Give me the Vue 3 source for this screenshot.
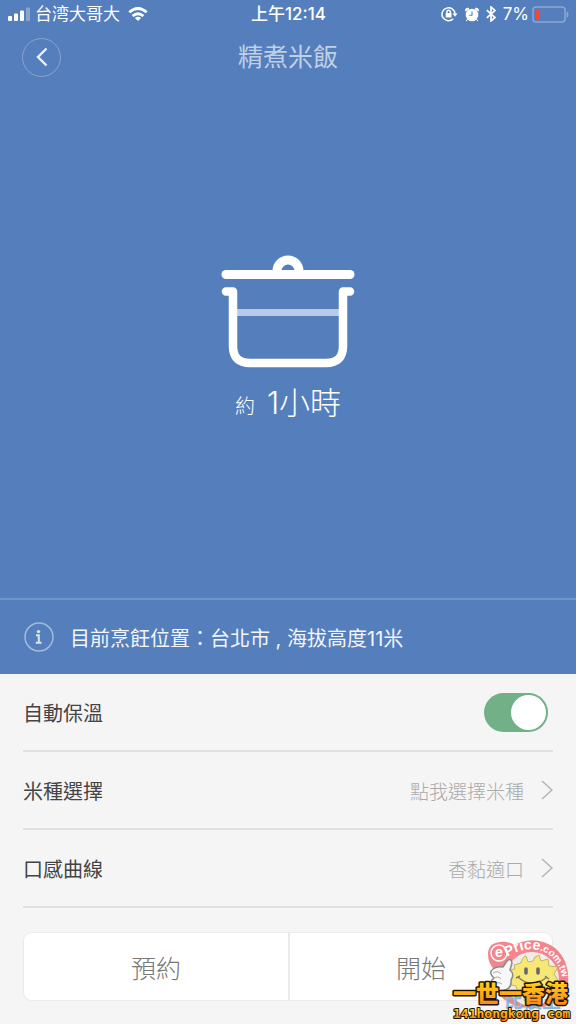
<script setup>
import { ref } from 'vue'

const keepWarm = ref(true)
const options = [
  { label: '米種選擇', value: '點我選擇米種' },
  { label: '口感曲線', value: '香黏適口' },
]
</script>

<template>
  <div class="screen">
    <section class="hero">
      <div class="status">
        <div class="status-left">
          <svg width="22" height="14" viewBox="0 0 22 14" fill="#fff" aria-hidden="true">
            <rect x="0" y="9" width="4" height="5" rx="1" />
            <rect x="6" y="6.500" width="4" height="7.500" rx="1" />
            <rect x="12" y="3.500" width="4" height="10.500" rx="1" />
            <rect x="18" y="0.500" width="4" height="13.500" rx="1" opacity=".3" />
          </svg>
          <span class="carrier">台湾大哥大</span>
          <svg width="20" height="14" viewBox="0 0 20 14" fill="none" stroke="#fff" stroke-width="2.800" aria-hidden="true">
            <path d="M1.300 5.300Q10-2.400 18.700 5.300M4.600 9Q10 4.500 15.400 9" />
            <path d="M10 14L6.900 11Q10 8.700 13.100 11Z" fill="#fff" stroke="none" />
          </svg>
        </div>
        <time class="clock">上午12:14</time>
        <div class="status-right">
          <svg width="17" height="16" viewBox="0 0 17 16" fill="none" stroke="#fff" stroke-width="1.500" aria-hidden="true">
            <path d="M12.200 12.800A6.500 6.500 0 1 1 14 8" />
            <path d="M11.400 7.600H16.600L14 10.800Z" fill="#fff" stroke="none" />
            <rect x="4.700" y="7" width="5.800" height="4.500" fill="#fff" stroke="none" />
            <path d="M5.900 7V5.800Q6 4.300 7.600 4.300T9.400 5.800V7" />
          </svg>
          <svg width="14" height="15" viewBox="0 0 14 15" aria-hidden="true">
            <circle cx="7" cy="8" r="6.300" fill="#fff" />
            <path d="M.8 4.200Q-.2 1.600 2 1.200Q3.200.9 4 1.800ZM13.200 4.200Q14.200 1.600 12 1.200Q10.800.9 10 1.800ZM2.500 12L1.200 14.200M11.500 12L12.800 14.200" fill="#fff" stroke="#fff" />
            <path d="M7 4.500V8.300H4.200" fill="none" stroke="#557fbc" stroke-width="1.100" />
          </svg>
          <svg width="10" height="16" viewBox="0 0 10 16" fill="none" stroke="#fff" stroke-width="1.700" aria-hidden="true">
            <path d="M.8 4.200L9 11.500L5 15V1L9 4.500L.8 11.800" />
          </svg>
          <span class="percent">7%</span>
          <svg class="battery" width="37" height="17" viewBox="0 0 37 17" aria-hidden="true">
            <rect x="1" y="1" width="32" height="15" rx="3" fill="none" stroke="#8ba8d2" stroke-width="1.500" />
            <path d="M34.500 5.500Q36.500 6 36.500 8.500T34.500 11.500Z" fill="#8ba8d2" />
            <rect x="3" y="3" width="4" height="11" rx="1" fill="#f4453d" />
          </svg>
        </div>
      </div>

      <header class="header">
        <button class="back" type="button" aria-label="返回">
          <svg width="12" height="20" viewBox="0 0 12 20" fill="none" stroke="#edf2f8" stroke-width="2.400" aria-hidden="true">
            <path d="M10.500 1.500L2 10L10.500 18.500" />
          </svg>
        </button>
        <h1>精煮米飯</h1>
      </header>

      <div class="cooker">
        <svg width="134" height="114" viewBox="0 0 134 114" fill="none" stroke="#fff" aria-hidden="true">
          <path d="M16 57.500H118" stroke="#b9cbe4" stroke-width="7" />
          <path d="M5 19.500H129" stroke-width="9" stroke-linecap="round" />
          <path d="M56 19V16A11 11 0 0 1 78 16V19" stroke-width="9" />
          <path d="M5 36.500H12V91Q12 108 29 108H105Q122 108 122 91V36.500H129" stroke-width="8.500" stroke-linecap="round" stroke-linejoin="round" />
        </svg>
        <p class="duration"><small>約</small><span>1小時</span></p>
      </div>

      <div class="location">
        <svg width="30" height="30" viewBox="0 0 30 30" aria-hidden="true">
          <circle cx="15" cy="15" r="14" fill="none" stroke="#a3badb" stroke-width="1.500" />
          <circle cx="14.500" cy="9.600" r="1.700" fill="#dbe5f1" />
          <path d="M12 13.300H14.800V20.500M11.800 20.700H17.500" fill="none" stroke="#dbe5f1" stroke-width="2" />
        </svg>
        <span>目前烹飪位置：台北市 , 海拔高度11米</span>
      </div>
    </section>

    <main class="settings">
      <div class="row">
        <label for="warm">自動保溫</label>
        <input id="warm" v-model="keepWarm" class="switch" type="checkbox" role="switch" />
      </div>
      <button v-for="item in options" :key="item.label" class="row" type="button">
        <span>{{ item.label }}</span>
        <span class="value">
          {{ item.value }}
          <svg width="12" height="20" viewBox="0 0 12 20" fill="none" stroke="#b4b4b4" stroke-width="1.500" aria-hidden="true">
            <path d="M1 1L11 10L1 19" />
          </svg>
        </span>
      </button>
      <div class="actions">
        <button type="button">預約</button>
        <button type="button">開始</button>
      </div>
    </main>

    <svg class="watermark" width="126" height="88" viewBox="0 0 126 88">
      <defs>
        <linearGradient id="gold" x1="0" y1="0" x2="0" y2="1">
          <stop offset="0" stop-color="#ffe51c" />
          <stop offset=".5" stop-color="#ffb019" />
          <stop offset="1" stop-color="#ff7a14" />
        </linearGradient>
        <path id="badge-arc" d="M57 21Q80 7 98 18Q113 29 114 54" />
      </defs>
      <g opacity=".85">
        <path d="M38 18Q38 7 50 6Q58 5 64 9Q86-2 105 12Q120 25 118 48Q114 68 88 72Q57 74 47 54Q43 45 45 34Q38 28 38 18Z" fill="#f0707a" />
        <circle cx="82" cy="43" r="27" fill="#eee9e6" />
        <path d="M64 29L71 27Q72 21 76 20L78 26L83 25Q84 20 89 19L91 25L98 23L99 30L108 31L104 38L110 47L101 49L99 56H68L66 50L57 48L62 40L58 34L65 33Z" fill="#f6e35c" stroke="#b9a950" stroke-linejoin="round" />
        <path d="M76 33V37M88 33V37" stroke="#4d4850" stroke-width="3.500" stroke-linecap="round" />
        <path d="M68 41Q82 54 97 41M66 42L70 40M95 40L99 43" fill="none" stroke="#71624c" stroke-width="1.500" />
        <path d="M44 42Q38 37 43 33Q47 30 53 31L57 25Q61 21 62 27L60 34Q65 38 61 44Q62 52 55 54Q45 58 41 51Q39 46 44 42Z" fill="#f7f7f7" stroke="#777" stroke-width="1.500" />
        <path d="M43 37Q48 34 51 38M42 43Q48 39 51 43M43 49Q48 45 52 48" fill="none" stroke="#999" />
        <circle cx="49" cy="17" r="8" fill="none" stroke="#fff" stroke-width="1.500" />
        <text x="45" y="21" class="badge-e">e</text>
        <text class="badge-text"><textPath href="#badge-arc">Price<tspan class="badge-small">.com.tw</tspan></textPath></text>
        <text x="54" y="72" class="compare">比價王</text>
      </g>
      <text x="3" y="66" class="brand" fill="url(#gold)">一世一香港</text>
      <text x="3" y="82" class="site" fill="url(#gold)">141hongkong.com</text>
    </svg>
  </div>
</template>

<style>
body { margin: 0; background: #f5f5f5; }
</style>

<style scoped>
* { box-sizing: border-box; }
button { border: 0; padding: 0; margin: 0; background: none; font: inherit; color: inherit; cursor: pointer; }
svg { display: block; flex: none; }
.screen {
  position: relative;
  min-height: 100vh;
  display: flex;
  flex-direction: column;
  background: #f5f5f5;
  color: #444;
  font-family: Inter, "Noto Sans CJK TC", sans-serif;
  font-weight: 400;
  font-size: 20px;
}
.hero { flex: 1; display: flex; flex-direction: column; background: #557fbc; color: #fff; }
.status {
  height: 28px;
  padding: 0 7px 0 8px;
  display: grid;
  grid-template-columns: 1fr auto 1fr;
  align-items: center;
  font-size: 17px;
  line-height: 28px;
}
.status-left, .status-right { display: flex; align-items: center; }
.status-left { gap: 5px; }
.carrier { font-family: Inter, "Noto Sans CJK SC", sans-serif; }
.status-left svg:last-child { margin-left: 3px; }
.clock { font-family: Inter, "Noto Sans CJK TC", sans-serif; font-weight: 500; }
.status-right { justify-content: flex-end; gap: 7px; }
.battery { margin-left: -4px; }
.header {
  height: 58px;
  padding: 0 22px;
  display: grid;
  grid-template-columns: 1fr auto 1fr;
  align-items: center;
}
.back {
  width: 39px;
  height: 39px;
  border: 1px solid #86a5d0;
  border-radius: 50%;
  display: flex;
  align-items: center;
  justify-content: center;
}
h1 { margin: 0; font-size: 25px; line-height: 36px; font-weight: 400; color: #bfd0e7; }
.cooker { flex: 1; display: flex; flex-direction: column; align-items: center; justify-content: center; }
.duration { margin: 12px 0 0; display: flex; align-items: baseline; gap: 12px; font-size: 31px; line-height: 44px; font-weight: 300; }
.duration small { font-size: 20px; }
.location { height: 76px; padding: 0 24px; border-top: 2px solid #7295c8; display: flex; align-items: center; gap: 16px; }
.location span { color: #f2f5fa; }
.settings { padding: 0 23px 23px; }
.row {
  width: 100%;
  height: 78px;
  border-bottom: 2px solid #e0e0e0;
  display: flex;
  align-items: center;
  justify-content: space-between;
  text-align: left;
}
.value { display: flex; align-items: center; gap: 17px; font-size: 19px; font-weight: 300; color: #aaa; }
.switch {
  appearance: none;
  width: 64px;
  height: 39px;
  margin: 0 5px 0 0;
  padding: 2px;
  border-radius: 20px;
  background: #bbb;
  display: flex;
  cursor: pointer;
}
.switch::before { content: ""; width: 35px; height: 35px; border-radius: 50%; background: #fff; }
.switch:checked { justify-content: flex-end; background: #72b087; }
.actions {
  height: 69px;
  margin-top: 24px;
  display: grid;
  grid-template-columns: 1fr 1fr;
  border: 1px solid #ebebeb;
  border-radius: 9px;
  background: #fff;
  color: #777;
  font-size: 25px;
  font-weight: 300;
}
.actions button + button { border-left: 2px solid #ebebeb; }
.watermark { position: absolute; right: 0; bottom: 0; pointer-events: none; }
.brand { font: 900 23px "Noto Sans CJK TC", sans-serif; stroke: #211400; stroke-width: 3px; stroke-linejoin: round; paint-order: stroke; }
.site { font: 700 13px "DejaVu Sans Mono", monospace; stroke: #211400; stroke-width: 2px; stroke-linejoin: round; paint-order: stroke; }
.badge-e { font: 700 14px "Liberation Sans", sans-serif; fill: #fff; }
.badge-text { font: 700 14px "Liberation Sans", sans-serif; fill: #fff; }
.badge-small { font-size: 10px; }
.compare { font: 700 19px "Noto Sans CJK TC", sans-serif; fill: #77add7; }
</style>
